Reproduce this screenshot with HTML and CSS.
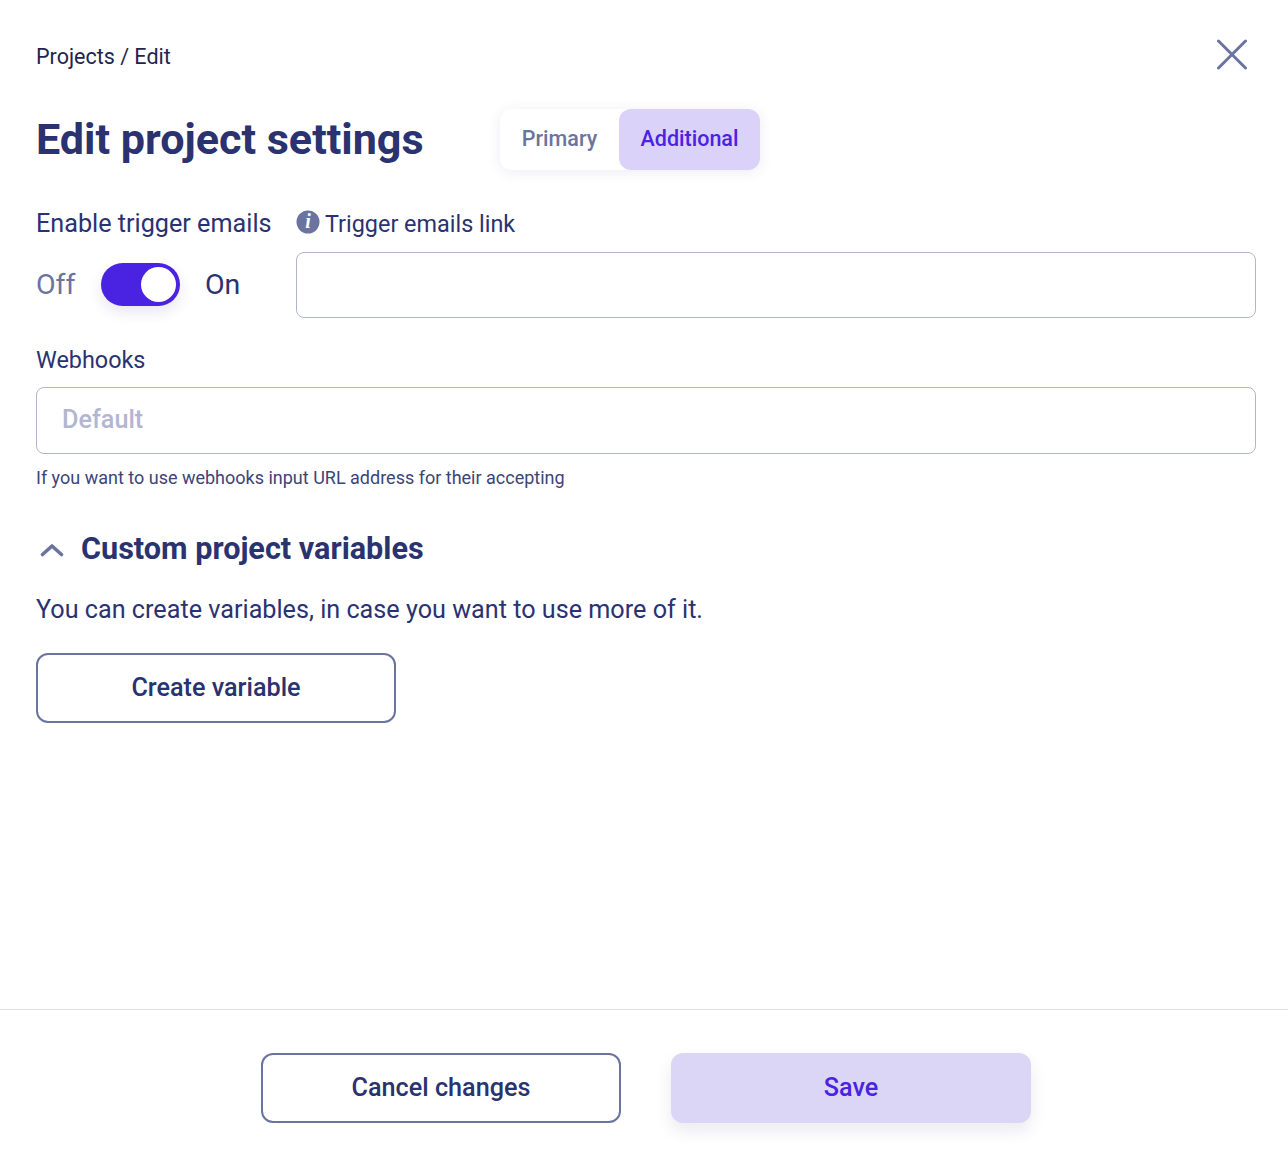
FILE: index.html
```html
<!DOCTYPE html>
<html lang="en">
<head>
<meta charset="utf-8">
<title>Edit project settings</title>
<link rel="stylesheet" href="styles.css">
</head>
<body>
<div class="page">
  <main class="content">
    <div class="topbar">
      <div class="crumbs">Projects / Edit</div>
      <button class="close" aria-label="Close">
        <svg width="32" height="32" viewBox="0 0 32 32"><path d="M2.5 3 L29.5 30 M29.5 3 L2.5 30" fill="none" stroke="#6b739f" stroke-width="3" stroke-linecap="round"/></svg>
      </button>
    </div>
    <div class="titlebar">
      <h1 class="title">Edit project settings</h1>
      <div class="tabs">
        <div class="tab">Primary</div>
        <div class="tab tab-active">Additional</div>
      </div>
    </div>
    <div class="trigger-row">
      <div class="trigger-left">
        <div class="label label-enable">Enable trigger emails</div>
        <div class="switch-row">
          <span class="off">Off</span>
          <span class="switch"><span class="knob"></span></span>
          <span class="on">On</span>
        </div>
      </div>
      <div class="trigger-right">
        <div class="label-icon">
          <svg class="info" width="24" height="24" viewBox="0 0 24 24"><circle cx="12" cy="12" r="11.5" fill="#6b739f"/><text x="12" y="18.4" text-anchor="middle" class="info-i">i</text></svg>
          <span class="label">Trigger emails link</span>
        </div>
        <div class="input input-a"></div>
      </div>
    </div>
    <div class="label webhooks-label">Webhooks</div>
    <div class="input input-b">Default</div>
    <div class="hint">If you want to use webhooks input URL address for their accepting</div>
    <div class="section-head">
      <svg class="chevron" width="24" height="14" viewBox="0 0 24 14"><path d="M2.5 11.5 L12 3 L21.5 11.5" fill="none" stroke="#6b739f" stroke-width="3.6" stroke-linecap="round" stroke-linejoin="round"/></svg>
      <h2 class="section-title">Custom project variables</h2>
    </div>
    <p class="desc">You can create variables, in case you want to use more of it.</p>
    <button class="btn btn-outline">Create variable</button>
  </main>
  <footer class="footer">
    <button class="btn btn-outline">Cancel changes</button>
    <button class="btn btn-save">Save</button>
  </footer>
</div>
</body>
</html>
```
FILE: styles.css
```css
* { box-sizing: border-box; }
html, body { margin: 0; padding: 0; background: #fff; }
body { font-family: Roboto, sans-serif; color: #2a3270; }
.page { width: 1288px; height: 1160px; display: flex; flex-direction: column; }
.content { flex: 1; padding: 38px 32px 0 36px; min-height: 0; }
.topbar { display: flex; justify-content: space-between; align-items: center; height: 32px; }
.crumbs { font-size: 21.5px; line-height: 32px; color: #1f2550; padding-top: 5px; }
.close { border: 0; background: none; padding: 0; width: 32px; height: 32px; margin-right: 8px; display: block; }
.close svg { display: block; }
.titlebar { display: flex; align-items: center; margin-top: 39px; height: 61px; }
.title { margin: 0; font-size: 43.1px; line-height: 61px; font-weight: 700; color: #2a3270; width: 464px; }
.tabs { display: flex; height: 61px; border-radius: 12px; box-shadow: 0 2px 14px rgba(60, 60, 120, .09); background: #fff; }
.tab { font-size: 21.5px; font-weight: 500; line-height: 60px; width: 119px; text-align: center; color: #6b739f; border-radius: 12px; }
.tab-active { background: #dbd2f9; color: #4a22e2; width: 141px; }
.trigger-row { display: flex; margin-top: 36px; }
.trigger-left { width: 260px; }
.label { font-size: 23.4px; line-height: 36px; color: #2a3270; }
.label-enable { font-size: 25.2px; }
.switch-row { display: flex; align-items: center; margin-top: 21px; height: 43px; }
.off { font-size: 28.5px; color: #6b739f; width: 65px; }
.on { font-size: 28.5px; color: #2a3270; margin-left: 25px; }
.switch { width: 79px; height: 43px; border-radius: 22px; background: #4a22e2; position: relative; box-shadow: 0 6px 14px rgba(60, 60, 120, .12); }
.knob { position: absolute; right: 4px; top: 4px; width: 35px; height: 35px; border-radius: 50%; background: #fff; }
.trigger-right { flex: 1; }
.label-icon { display: flex; align-items: center; height: 36px; gap: 5px; }
.info { margin-top: -5px; }
.info-i { font-family: "Liberation Serif", serif; font-style: italic; font-weight: 700; font-size: 20px; fill: #fff; }
.input { border: 1px solid #b1b4cf; border-radius: 8px; background: #fff; width: 960px; }
.input-a { height: 66px; margin-top: 10px; }
.webhooks-label { margin-top: 24px; }
.input-b { width: 100%; height: 67px; margin-top: 9px; padding-left: 25px; font-size: 25.2px; font-weight: 500; line-height: 64px; color: #b3b6d0; }
.hint { font-size: 18px; line-height: 28px; color: #3d4478; margin-top: 10px; }
.section-head { display: flex; align-items: center; margin-top: 35px; height: 44px; }
.chevron { margin: 2px 17px 0 4px; }
.section-title { margin: 0; font-size: 30.6px; font-weight: 700; line-height: 44px; color: #2a3270; }
.desc { margin: 21px 0 0; font-size: 25.2px; line-height: 36px; color: #2a3270; }
.btn { display: block; width: 360px; height: 70px; border-radius: 12px; font-family: Roboto, sans-serif; font-size: 25.2px; font-weight: 500; padding: 0 0 2px; }
.btn-outline { background: #fff; border: 2px solid #6b739f; color: #2a3270; }
.content .btn { margin-top: 25px; }
.footer { height: 151px; border-top: 1px solid #dedfe9; display: flex; justify-content: center; gap: 50px; padding: 43px 0 0 4px; }
.btn-save { background: #dbd6f6; border: 0; color: #4a22e2; box-shadow: 0 8px 16px rgba(60, 60, 120, .1); }
```
